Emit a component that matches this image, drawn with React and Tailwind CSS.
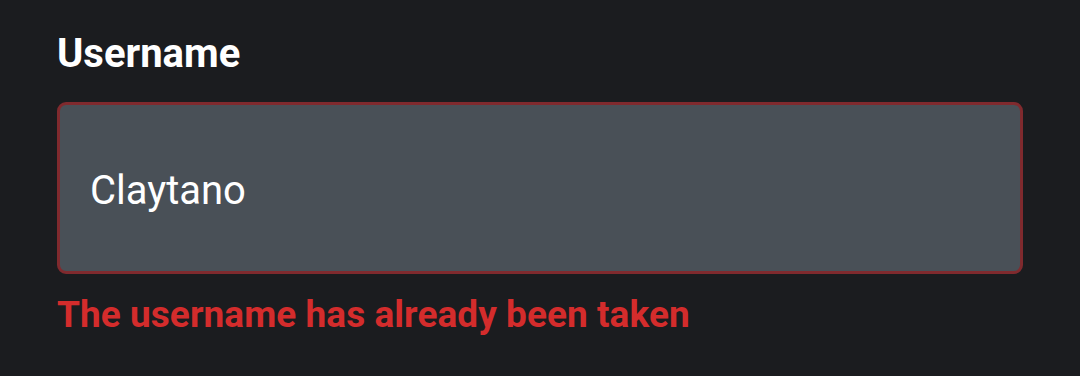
export default function App() {
  return (
    <div className="w-[1080px] h-[376px] bg-[#1b1c1f] px-[57px] pt-[30px] font-['Roboto',sans-serif]">
      <label className="block text-[40px] leading-[47px] font-bold text-white">Username</label>
      <div className="mt-[25px] h-[172px] w-[966px] rounded-[9px] border-[3px] border-[#802a2e] bg-[#495057] flex items-center pl-[30px] pt-[5px]">
        <span className="text-[40px] text-white">Claytano</span>
      </div>
      <div className="mt-[19px] text-[37px] leading-[43px] font-bold tracking-[0.05px] text-[#d42c2c]">
        The username has already been taken
      </div>
    </div>
  );
}
